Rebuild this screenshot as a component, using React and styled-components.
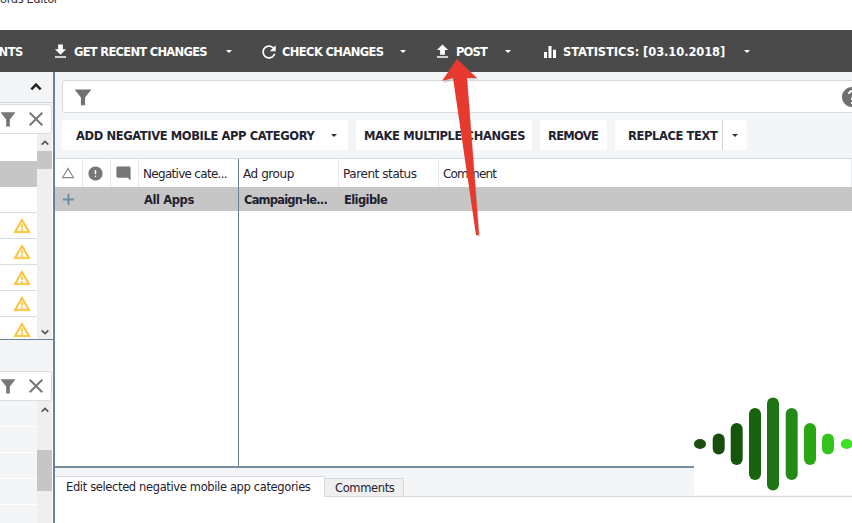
import React from "react";
import styled, { createGlobalStyle } from "styled-components";

const Global = createGlobalStyle`
  html, body { margin: 0; padding: 0; background: #fff; }
  body { font-family: "DejaVu Sans", Verdana, sans-serif; color: #1c1c28; }
  * { box-sizing: border-box; }
`;

const P = {
  download: "M19 9h-4V3H9v6H5l7 7 7-7zM5 18v2h14v-2H5z",
  upload: "M9 16h6v-6h4l-7-7-7 7h4zm-4 2h14v2H5z",
  refresh: "M17.65 6.35C16.2 4.9 14.21 4 12 4c-4.42 0-7.99 3.58-7.99 8s3.57 8 7.99 8c3.73 0 6.84-2.55 7.73-6h-2.08c-.82 2.33-3.04 4-5.65 4-3.31 0-6-2.69-6-6s2.69-6 6-6c1.66 0 3.14.69 4.22 1.78L13 11h7V4l-2.35 2.35z",
  bars: "M4 12h4v8H4zM10 4h4v16h-4zM16 9h4v11h-4z",
  funnel: "M2 3h20l-7.5 9.5V22h-5v-9.5z",
  close: "M19 6.41 17.59 5 12 10.59 6.41 5 5 6.41 10.59 12 5 17.59 6.41 19 12 13.41 17.59 19 19 17.59 13.41 12z",
  warn: "M12 5.99 19.53 19H4.47L12 5.99M12 2 1 21h22L12 2zm1 14h-2v2h2v-2zm0-6h-2v4h2v-4z",
  triangle: "M12 5.99 19.53 19H4.47L12 5.99M12 2 1 21h22L12 2z",
  error: "M12 2C6.48 2 2 6.48 2 12s4.48 10 10 10 10-4.48 10-10S17.52 2 12 2zm1 15h-2v-2h2v2zm0-4h-2V7h2v6z",
  comment: "M21.99 4c0-1.1-.89-2-1.99-2H4c-1.1 0-2 .9-2 2v12c0 1.1.9 2 2 2h14l4 4-.01-18z",
  help: "M12 2C6.48 2 2 6.48 2 12s4.48 10 10 10 10-4.48 10-10S17.52 2 12 2zm1 17h-2v-2h2v2zm2.07-7.75-.9.92C13.45 12.9 13 13.5 13 15h-2v-.5c0-1.1.45-2.1 1.17-2.83l1.24-1.26c.37-.36.59-.86.59-1.41 0-1.1-.9-2-2-2s-2 .9-2 2H8c0-2.21 1.79-4 4-4s4 1.79 4 4c0 .88-.36 1.68-.93 2.25z",
  plus: "M10.8 5h2.4v5.8H19v2.4h-5.8V19h-2.4v-5.8H5v-2.4h5.8z",
};

const Icon = ({ d, size = 16, color = "currentColor", stroke }) => (
  <svg width={size} height={size} viewBox="0 0 24 24" fill={color} stroke={stroke} strokeWidth={stroke ? 0.6 : 0} style={{ display: "block", flex: "none" }}>
    <path d={d} />
  </svg>
);

const Page = styled.div`
  position: relative;
  width: 852px;
  height: 523px;
  overflow: hidden;
  display: flex;
  flex-direction: column;
  background: #fff;
`;

const TitleBar = styled.div`
  height: 30px;
  flex: none;
  overflow: hidden;
`;
const TitleText = styled.div`
  font-size: 11.5px;
  letter-spacing: -0.4px;
  line-height: 14px;
  margin-top: -8px;
  color: #333;
`;

const Toolbar = styled.div`
  height: 42px;
  flex: none;
  background: #4a4a4a;
  color: #fff;
  display: flex;
  align-items: center;
  white-space: nowrap;
  font-size: 11.5px;
  font-weight: 700;
  letter-spacing: -0.39px;
  overflow: hidden;
  padding-top: 1px;
`;
const ClippedLabel = styled.div`
  width: 23px;
  display: flex;
  justify-content: flex-end;
  overflow: hidden;
  flex: none;
`;
const ToolItem = styled.div`
  display: flex;
  align-items: center;
  flex: none;
  width: ${(p) => p.$w}px;
  margin-left: ${(p) => p.$ml}px;
`;
const ToolText = styled.span`
  margin-left: ${(p) => p.$ml}px;
  width: ${(p) => p.$w}px;
  letter-spacing: ${(p) => p.$ls}px;
  flex: none;
`;
const Caret = styled.span`
  flex: none;
  width: 0;
  height: 0;
  border-left: 3px solid transparent;
  border-right: 3px solid transparent;
  border-top: 3px solid ${(p) => p.$c || "#fff"};
  margin-left: ${(p) => p.$ml || 0}px;
`;

const Body = styled.div`
  flex: 1;
  min-height: 0;
  display: flex;
`;

const Side = styled.aside`
  width: 55px;
  flex: none;
  border-right: 2px solid #6c8193;
  display: flex;
  flex-direction: column;
  background: #f4f5f7;
`;
const SideHead = styled.div`
  height: 31px;
  flex: none;
  border-bottom: 1px solid #d3d9de;
  display: flex;
  align-items: center;
  padding-left: 29px;
  color: #222;
`;
const SideSearch = styled.div`
  height: 30px;
  margin: 1px 1px 0 -6px;
  width: 58px;
  flex: none;
  background: #fff;
  border: 1px solid #d8dde2;
  border-radius: 3px;
  display: flex;
  align-items: center;
  padding-left: 4px;
  gap: 7px;
  color: #777;
`;
const SideList = styled.div`
  display: flex;
  height: ${(p) => p.$h}px;
  flex: none;
  overflow: hidden;
  background: ${(p) => p.$bg};
`;
const Rows = styled.div`
  width: 37px;
  flex: none;
  display: flex;
  flex-direction: column;
`;
const SideRow = styled.div`
  height: ${(p) => p.$h || 26}px;
  flex: none;
  display: flex;
  align-items: center;
  justify-content: flex-end;
  padding-right: 6px;
  background: ${(p) => p.$bg || "transparent"};
  border-bottom: 1px solid ${(p) => p.$line || "transparent"};
`;
const Scroll = styled.div`
  width: 15px;
  flex: none;
  margin-right: 1px;
  background: #efefef;
  display: flex;
  flex-direction: column;
  align-items: center;
  color: #555;
`;
const ScrollBtn = styled.div`
  height: ${(p) => p.$h || 17}px;
  flex: none;
  display: flex;
  align-items: center;
`;
const Spacer = styled.div`
  height: ${(p) => p.$h}px;
  flex: none;
`;
const Grow = styled.div`
  flex: 1;
`;
const Thumb = styled.div`
  width: 100%;
  height: ${(p) => p.$h}px;
  flex: none;
  background: #c6c6c6;
`;
const SideDivider = styled.div`
  height: 31px;
  flex: none;
  border-top: 1px solid #6c8193;
`;

const Main = styled.main`
  flex: 1;
  min-width: 0;
  background: #f4f5f7;
  display: flex;
  flex-direction: column;
`;
const FilterBar = styled.div`
  height: 33px;
  flex: none;
  margin: 8px -13px 0 7px;
  background: #fff;
  border: 1px solid #d6dbe0;
  border-radius: 3px;
  display: flex;
  align-items: center;
  justify-content: space-between;
  padding: 0 0 0 10px;
  color: #707070;
`;
const Actions = styled.div`
  height: 30px;
  flex: none;
  margin: 7px 0 8px 7px;
  display: flex;
  gap: 8px;
`;
const ActionBtn = styled.div`
  height: 30px;
  flex: none;
  width: ${(p) => p.$w}px;
  padding-left: ${(p) => p.$pl}px;
  background: #fff;
  border-radius: 2px;
  display: flex;
  align-items: center;
  font-size: 11.5px;
  font-weight: 700;
  letter-spacing: ${(p) => p.$ls || -0.39}px;
  white-space: nowrap;
  color: #1f2230;
`;
const ActionLabel = styled.span`
  padding-top: 1px;
`;
const SplitEdge = styled.div`
  width: 25px;
  height: 100%;
  margin-left: auto;
  border-left: 1px solid #c9d0d6;
  display: flex;
  align-items: center;
  justify-content: center;
`;

const Table = styled.div`
  height: 310px;
  flex: none;
  border-top: 1px solid #d3d9de;
  border-bottom: 2px solid #7b8e9e;
  background: #fff;
  display: flex;
  flex-direction: column;
`;
const COLS = "28px 28px 28px 100px 100px 100px 1fr";
const HeadRow = styled.div`
  height: 28px;
  flex: none;
  display: grid;
  grid-template-columns: ${COLS};
  font-size: 12px;
  letter-spacing: -0.42px;
  color: #1f2230;
`;
const HeadCell = styled.div`
  display: flex;
  align-items: center;
  justify-content: ${(p) => (p.$icon ? "center" : "flex-start")};
  padding: ${(p) => (p.$icon ? "0 2px 0 0" : "1px 0 0 4px")};
  border-right: 1px solid ${(p) => (p.$accent ? "#6c8193" : "#e6e9ec")};
  letter-spacing: ${(p) => p.$ls || -0.42}px;
  white-space: nowrap;
  overflow: hidden;
`;
const DataRow = styled.div`
  height: 24px;
  flex: none;
  display: grid;
  grid-template-columns: ${COLS};
  background: #c6c6c6;
  font-size: 11.5px;
  font-weight: 700;
  color: #1f2230;
`;
const DataCell = styled.div`
  display: flex;
  align-items: center;
  padding: 1px 0 0 5px;
  letter-spacing: ${(p) => p.$ls || -0.39}px;
  white-space: nowrap;
  overflow: hidden;
  border-right: 1px solid ${(p) => (p.$accent ? "#6c8193" : "transparent")};
`;
const PlusCell = styled(DataCell)`
  justify-content: center;
  padding: 0 1px 0 0;
`;
const TableFill = styled.div`
  flex: 1;
  display: grid;
  grid-template-columns: ${COLS};
`;
const FillCell = styled.div`
  border-right: 1px solid ${(p) => (p.$accent ? "#6c8193" : "transparent")};
`;

const Tabs = styled.div`
  height: 29px;
  flex: none;
  padding-top: 8px;
  display: flex;
  align-items: flex-end;
  border-bottom: 1px solid #d3d9de;
`;
const Tab = styled.div`
  height: ${(p) => (p.$active ? 21 : 19)}px;
  width: ${(p) => p.$w}px;
  padding-left: ${(p) => p.$pl}px;
  display: flex;
  align-items: center;
  flex: none;
  font-size: 11.5px;
  letter-spacing: -0.36px;
  white-space: nowrap;
  color: #1f2230;
  background: ${(p) => (p.$active ? "#fff" : "#efefef")};
  border: 1px solid #d3d9de;
  border-left: 0;
  border-bottom: ${(p) => (p.$active ? "1px solid #fff" : "1px solid #d3d9de")};
  margin-bottom: -1px;
`;
const TabBody = styled.div`
  flex: 1;
  background: #fff;
`;

const ArrowSvg = styled.svg`
  position: absolute;
  left: 436px;
  top: 54px;
`;
const LogoSvg = styled.svg`
  position: absolute;
  left: 694px;
  top: 395px;
  background: #fff;
`;

const Warn = () => <Icon d={P.warn} size={18} color="#fbc02d" stroke="#fbc02d" />;
const Chevron = ({ up, size = 12, w = 2 }) => (
  <svg width={size} height={size} viewBox="0 0 12 12" fill="none" stroke="currentColor" strokeWidth={w} style={{ display: "block" }}>
    <path d={up ? "M2 8l4-4 4 4" : "M2 4l4 4 4-4"} />
  </svg>
);

const logoBars = [
  [6, 10, "#1a4f10"], [24.7, 21, "#164f0c"], [42.7, 42, "#14570b"], [61, 72, "#186310"], [79, 93, "#1e7414"],
  [97.7, 72, "#238a18"], [116, 42, "#2aa514"], [134, 21, "#33c41c"], [152.7, 10, "#3de022"],
];

export default function App() {
  return (
    <Page>
      <Global />
      <TitleBar>
        <TitleText>ords Editor</TitleText>
      </TitleBar>
      <Toolbar>
        <ClippedLabel>ACCOUNTS</ClippedLabel>
        <ToolItem $ml={28} $w={181}>
          <Icon d={P.download} size={19} />
          <ToolText $ml={4} $w={133} $ls={-0.72}>GET RECENT CHANGES</ToolText>
          <Caret $ml={19} />
        </ToolItem>
        <ToolItem $ml={27} $w={147}>
          <Icon d={P.refresh} size={20} />
          <ToolText $ml={3} $w={101} $ls={-0.62}>CHECK CHANGES</ToolText>
          <Caret $ml={17} />
        </ToolItem>
        <ToolItem $ml={27} $w={78}>
          <Icon d={P.upload} size={19} />
          <ToolText $ml={4} $w={32} $ls={-0.85}>POST</ToolText>
          <Caret $ml={17} />
        </ToolItem>
        <ToolItem $ml={30} $w={209}>
          <Icon d={P.bars} size={18} />
          <ToolText $ml={4} $w={162} $ls={-0.1}>STATISTICS: [03.10.2018]</ToolText>
          <Caret $ml={19} />
        </ToolItem>
      </Toolbar>
      <Body>
        <Side>
          <SideHead>
            <Chevron up size={14} w={2.2} />
          </SideHead>
          <SideSearch>
            <Icon d={P.funnel} size={18} />
            <Icon d={P.close} size={24} />
          </SideSearch>
          <SideList $h={205} $bg="#fff">
            <Rows>
              <SideRow $h={27} />
              <SideRow $h={26} $bg="#c6c6c6" />
              <SideRow $h={26} $line="#d8dde2" />
              <SideRow $h={26} $line="#d8dde2"><Warn /></SideRow>
              <SideRow $h={26} $line="#d8dde2"><Warn /></SideRow>
              <SideRow $h={26} $line="#d8dde2"><Warn /></SideRow>
              <SideRow $h={26} $line="#d8dde2"><Warn /></SideRow>
              <SideRow $h={26}><Warn /></SideRow>
            </Rows>
            <Scroll>
              <ScrollBtn><Chevron up size={10} /></ScrollBtn>
              <Thumb $h={18} />
              <Grow />
              <ScrollBtn $h={14}><Chevron size={10} /></ScrollBtn>
            </Scroll>
          </SideList>
          <SideDivider />
          <SideSearch>
            <Icon d={P.funnel} size={18} />
            <Icon d={P.close} size={24} />
          </SideSearch>
          <SideList $h={122} $bg="#fff">
            <Rows>
              <SideRow $h={26} $bg="#f4f5f7" $line="#fff" />
              <SideRow $h={26} $bg="#f4f5f7" $line="#fff" />
              <SideRow $h={26} $bg="#f4f5f7" $line="#fff" />
              <SideRow $h={26} $bg="#f4f5f7" $line="#fff" />
              <SideRow $h={26} $bg="#f4f5f7" $line="#fff" />
            </Rows>
            <Scroll>
              <ScrollBtn><Chevron up size={10} /></ScrollBtn>
              <Spacer $h={32} />
              <Thumb $h={41} />
            </Scroll>
          </SideList>
        </Side>
        <Main>
          <FilterBar>
            <Icon d={P.funnel} size={20} />
            <Icon d={P.help} size={24} />
          </FilterBar>
          <Actions>
            <ActionBtn $w={286} $pl={14}>
              <ActionLabel>ADD NEGATIVE MOBILE APP CATEGORY</ActionLabel>
              <Caret $c="#333" $ml={17} />
            </ActionBtn>
            <ActionBtn $w={176} $pl={8}><ActionLabel>MAKE MULTIPLE CHANGES</ActionLabel></ActionBtn>
            <ActionBtn $w={67} $pl={8} $ls={-0.72}><ActionLabel>REMOVE</ActionLabel></ActionBtn>
            <ActionBtn $w={132} $pl={13}>
              <ActionLabel>REPLACE TEXT</ActionLabel>
              <SplitEdge><Caret $c="#333" /></SplitEdge>
            </ActionBtn>
          </Actions>
          <Table>
            <HeadRow>
              <HeadCell $icon><Icon d={P.triangle} size={14} color="#888" /></HeadCell>
              <HeadCell $icon><Icon d={P.error} size={17} color="#777" /></HeadCell>
              <HeadCell $icon><Icon d={P.comment} size={17} color="#777" /></HeadCell>
              <HeadCell $accent $ls={-0.7}>Negative cate...</HeadCell>
              <HeadCell>Ad group</HeadCell>
              <HeadCell>Parent status</HeadCell>
              <HeadCell $ls={-0.8}>Comment</HeadCell>
            </HeadRow>
            <DataRow>
              <PlusCell><Icon d={P.plus} size={19} color="#6c8da8" /></PlusCell>
              <DataCell />
              <DataCell />
              <DataCell $accent>All Apps</DataCell>
              <DataCell $ls={-0.8}>Campaign-le...</DataCell>
              <DataCell $ls={-0.6}>Eligible</DataCell>
              <DataCell />
            </DataRow>
            <TableFill>
              <FillCell />
              <FillCell />
              <FillCell />
              <FillCell $accent />
              <FillCell />
              <FillCell />
              <FillCell />
            </TableFill>
          </Table>
          <Tabs>
            <Tab $active $w={270} $pl={11}>Edit selected negative mobile app categories</Tab>
            <Tab $w={79} $pl={10}>Comments</Tab>
          </Tabs>
          <TabBody />
        </Main>
      </Body>
      <ArrowSvg width="50" height="190" viewBox="0 0 50 190">
        <path d="M22 5 L6.5 27.5 L17.5 25 L40 181 L43.5 181 L31 24 L42 24 Z" fill="#8a8a8a" opacity="0.35" transform="translate(0.5 1.5)" />
        <path d="M21 5 L6 27 L17 24 L40 181 L43 181 L31 24 L41 24 Z" fill="#e8392f" />
      </ArrowSvg>
      <LogoSvg width="158" height="100" viewBox="0 0 158 100">
        {logoBars.map(([x, h, c]) => (
          <rect key={x} x={x - 6} y={49 - h / 2} width="12" height={h} rx="6" fill={c} />
        ))}
      </LogoSvg>
    </Page>
  );
}
